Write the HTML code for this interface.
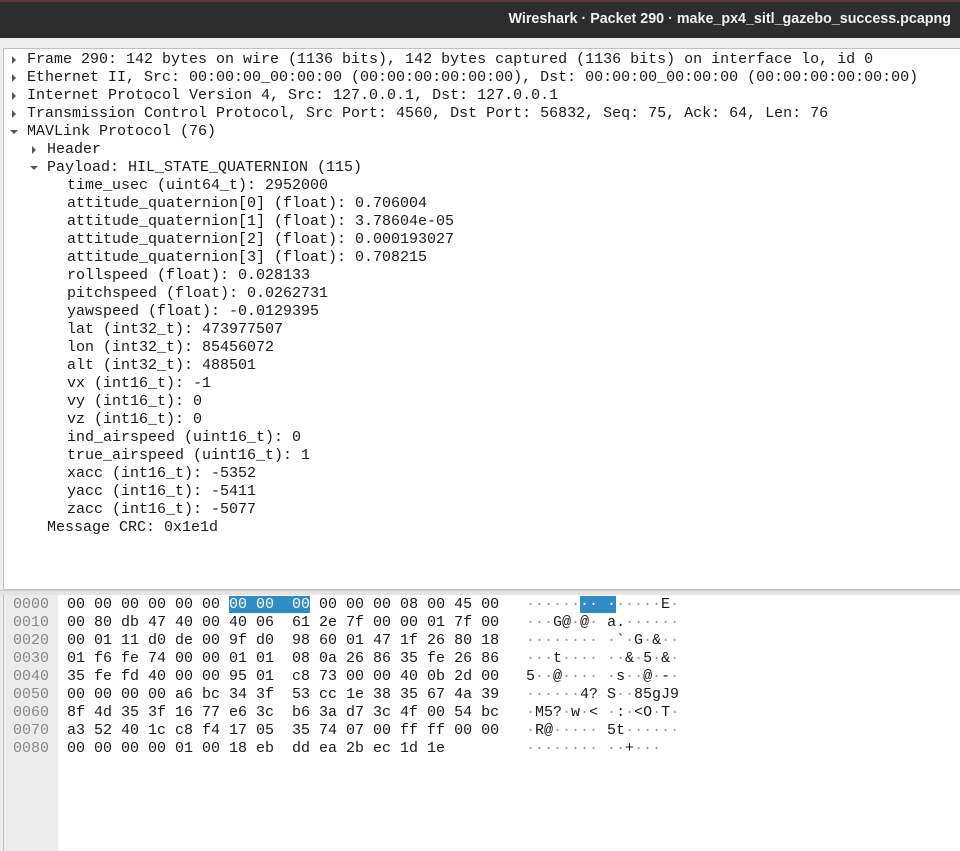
<!DOCTYPE html>
<html><head><meta charset="utf-8"><style>
body{margin:0;width:960px;height:851px;overflow:hidden;background:#ededed;font-family:"Liberation Mono",monospace;font-size:15px;position:relative}
#title{position:absolute;left:0;top:0;width:960px;height:38px;background:#2d2d2d;border-top:2px solid #5a3a3a;box-sizing:border-box}
#title span{position:absolute;right:9px;top:9px;color:#f0f0f0;font:bold 14.3px "Liberation Sans",sans-serif}
#tree{position:absolute;left:3px;top:48px;width:960px;height:542px;background:#fff;border:1px solid #c0c0c0;border-right:none;box-sizing:border-box}
.l{position:absolute;height:18px;line-height:18px;white-space:pre;color:#1a1a1a}
.a{position:absolute;width:0;height:0}
.r{border-top:4px solid transparent;border-bottom:4px solid transparent;border-left:4px solid #555}
.d{border-left:4px solid transparent;border-right:4px solid transparent;border-top:4px solid #555}
#split{position:absolute;left:0;top:590px;width:960px;height:5px;background:#e4e4e4;border-top:1px solid #cfcfcf}
#hex{position:absolute;left:3px;top:595px;width:960px;height:256px;background:#fff;border-left:1px solid #c0c0c0}
#off{position:absolute;left:4px;top:595px;width:54px;height:256px;background:#ececec}
.o{color:#888}
.g{color:#999}
.hl{background:#308cc6;color:#fff}
</style></head><body>
<div id="title"><span>Wireshark · Packet 290 · make_px4_sitl_gazebo_success.pcapng</span></div>
<div id="tree"></div>
<div class="a r" style="left:12px;top:56px"></div><div class="l" style="left:27px;top:51px">Frame 290: 142 bytes on wire (1136 bits), 142 bytes captured (1136 bits) on interface lo, id 0</div>
<div class="a r" style="left:12px;top:74px"></div><div class="l" style="left:27px;top:69px">Ethernet II, Src: 00:00:00_00:00:00 (00:00:00:00:00:00), Dst: 00:00:00_00:00:00 (00:00:00:00:00:00)</div>
<div class="a r" style="left:12px;top:92px"></div><div class="l" style="left:27px;top:87px">Internet Protocol Version 4, Src: 127.0.0.1, Dst: 127.0.0.1</div>
<div class="a r" style="left:12px;top:110px"></div><div class="l" style="left:27px;top:105px">Transmission Control Protocol, Src Port: 4560, Dst Port: 56832, Seq: 75, Ack: 64, Len: 76</div>
<div class="a d" style="left:10px;top:130px"></div><div class="l" style="left:27px;top:123px">MAVLink Protocol (76)</div>
<div class="a r" style="left:32px;top:146px"></div><div class="l" style="left:47px;top:141px">Header</div>
<div class="a d" style="left:30px;top:166px"></div><div class="l" style="left:47px;top:159px">Payload: HIL_STATE_QUATERNION (115)</div>
<div class="l" style="left:67px;top:177px">time_usec (uint64_t): 2952000
attitude_quaternion[0] (float): 0.706004
attitude_quaternion[1] (float): 3.78604e-05
attitude_quaternion[2] (float): 0.000193027
attitude_quaternion[3] (float): 0.708215
rollspeed (float): 0.028133
pitchspeed (float): 0.0262731
yawspeed (float): -0.0129395
lat (int32_t): 473977507
lon (int32_t): 85456072
alt (int32_t): 488501
vx (int16_t): -1
vy (int16_t): 0
vz (int16_t): 0
ind_airspeed (uint16_t): 0
true_airspeed (uint16_t): 1
xacc (int16_t): -5352
yacc (int16_t): -5411
zacc (int16_t): -5077</div>
<div class="l" style="left:47px;top:519px">Message CRC: 0x1e1d</div>
<div id="split"></div>
<div id="hex"></div>
<div id="off"></div>
<div class="l o" style="left:13px;top:596px">0000
0010
0020
0030
0040
0050
0060
0070
0080</div>
<div class="l" style="left:67px;top:596px">00 00 00 00 00 00 <span class="hl">00 00  00</span> 00 00 00 08 00 45 00
00 80 db 47 40 00 40 06  61 2e 7f 00 00 01 7f 00
00 01 11 d0 de 00 9f d0  98 60 01 47 1f 26 80 18
01 f6 fe 74 00 00 01 01  08 0a 26 86 35 fe 26 86
35 fe fd 40 00 00 95 01  c8 73 00 00 40 0b 2d 00
00 00 00 00 a6 bc 34 3f  53 cc 1e 38 35 67 4a 39
8f 4d 35 3f 16 77 e6 3c  b6 3a d7 3c 4f 00 54 bc
a3 52 40 1c c8 f4 17 05  35 74 07 00 ff ff 00 00
00 00 00 00 01 00 18 eb  dd ea 2b ec 1d 1e</div>
<div class="l" style="left:526px;top:596px"><span class="g">······</span><span class="hl">·· ·</span><span class="g">·····</span>E<span class="g">·</span>
<span class="g">···</span>G@<span class="g">·</span>@<span class="g">·</span> a.<span class="g">······</span>
<span class="g">········ ·</span>`<span class="g">·</span>G<span class="g">·</span>&amp;<span class="g">··</span>
<span class="g">···</span>t<span class="g">···· ··</span>&amp;<span class="g">·</span>5<span class="g">·</span>&amp;<span class="g">·</span>
5<span class="g">··</span>@<span class="g">···· ·</span>s<span class="g">··</span>@<span class="g">·</span>-<span class="g">·</span>
<span class="g">······</span>4? S<span class="g">··</span>85gJ9
<span class="g">·</span>M5?<span class="g">·</span>w<span class="g">·</span>&lt; <span class="g">·</span>:<span class="g">·</span>&lt;O<span class="g">·</span>T<span class="g">·</span>
<span class="g">·</span>R@<span class="g">·····</span> 5t<span class="g">······</span>
<span class="g">········ ··</span>+<span class="g">···</span></div>
</body></html>
